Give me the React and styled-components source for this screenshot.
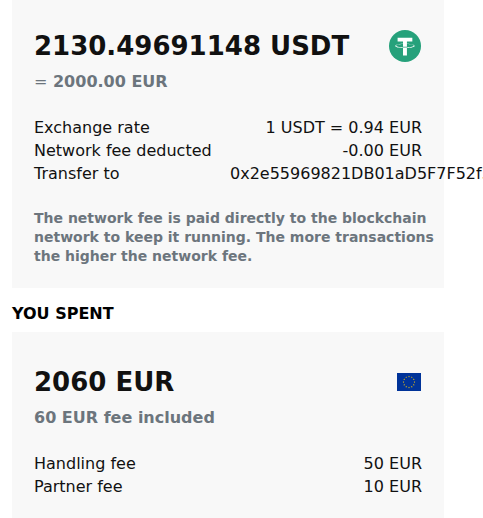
import React from 'react';
import styled, { createGlobalStyle } from 'styled-components';

const GlobalStyle = createGlobalStyle`
  *, *::before, *::after { box-sizing: border-box; }
  body {
    margin: 0;
    background: #fff;
    color: #111;
    font: 16px/23px "DejaVu Sans", Verdana, sans-serif;
  }
`;

const Page = styled.main`
  padding-left: 12px;
  padding-right: 39px;
  overflow-x: clip;
`;

const Card = styled.section`
  padding: ${({ $top }) => $top}px 22px ${({ $bottom }) => $bottom}px;
  background: #f8f8f8;
`;

const AmountRow = styled.div`
  display: flex;
  align-items: center;
  justify-content: space-between;
  padding-right: 1px;
`;

const Amount = styled.h1`
  margin: 0;
  font-size: 26px;
  line-height: 40px;
  font-weight: 700;
  white-space: nowrap;
`;

const Subtitle = styled.p`
  margin: 4px 0 22px;
  color: #6c757d;
  font-weight: 700;
  line-height: 24px;
`;

const EqualSign = styled.span`
  font-weight: 400;
`;

const Details = styled.dl`
  margin: 0;
`;

const DetailRow = styled.div`
  display: grid;
  grid-template-columns: minmax(0, 1fr) minmax(0, 1fr);
  column-gap: 4px;
`;

const Label = styled.dt`
  white-space: nowrap;
`;

const Value = styled.dd`
  margin: 0;
  text-align: right;
  white-space: nowrap;
`;

const Note = styled.p`
  margin: 24px -12px 0 0;
  color: #6c757d;
  font-size: 14px;
  line-height: 19px;
  font-weight: 700;
`;

const SectionTitle = styled.h2`
  margin: 14px 0 6px;
  font-size: 16px;
  line-height: 24px;
  font-weight: 700;
  color: #000;
`;

const Icon = styled.svg`
  display: block;
  flex: none;
`;

function TetherIcon() {
  return (
    <Icon width="32" height="32" viewBox="0 0 32 32" role="img" aria-label="USDT">
      <circle cx="16" cy="16" r="16" fill="#26a17b" />
      <path
        fill="#fff"
        d="M17.922 17.383v-.002c-.11.008-.677.042-1.942.042-1.01 0-1.721-.03-1.971-.042v.003c-3.888-.171-6.79-.848-6.79-1.658 0-.809 2.902-1.486 6.79-1.66v2.644c.254.018.982.061 1.988.061 1.207 0 1.812-.05 1.925-.06v-2.643c3.88.173 6.775.85 6.775 1.658 0 .81-2.895 1.485-6.775 1.657m0-3.59v-2.366h5.414V7.819H8.595v3.608h5.414v2.365c-4.4.202-7.709 1.074-7.709 2.118 0 1.044 3.309 1.915 7.709 2.118v7.582h3.913v-7.584c4.393-.202 7.694-1.073 7.694-2.116 0-1.043-3.301-1.914-7.694-2.117"
      />
    </Icon>
  );
}

const STAR = 'M0-1 .225-.309.951-.309.363.118.588.809 0 .382-.588.809-.363.118-.951-.309-.225-.309z';

function EuFlag() {
  return (
    <Icon width="24" height="18" viewBox="0 0 24 18" role="img" aria-label="EUR">
      <rect width="24" height="18" fill="#039" />
      {Array.from({ length: 12 }, (_, i) => {
        const a = (i * Math.PI) / 6;
        return (
          <path
            key={i}
            d={STAR}
            fill="#fc0"
            transform={`translate(${12 + 5.5 * Math.sin(a)} ${9 - 5.5 * Math.cos(a)})`}
          />
        );
      })}
    </Icon>
  );
}

const RECEIVED = [
  ['Exchange rate', '1 USDT = 0.94 EUR'],
  ['Network fee deducted', '-0.00 EUR'],
  ['Transfer to', '0x2e55969821DB01aD5F7F52f3'],
];

const SPENT = [
  ['Handling fee', '50 EUR'],
  ['Partner fee', '10 EUR'],
];

function DetailList({ items }) {
  return (
    <Details>
      {items.map(([label, value]) => (
        <DetailRow key={label}>
          <Label>{label}</Label>
          <Value>{value}</Value>
        </DetailRow>
      ))}
    </Details>
  );
}

export default function App() {
  return (
    <Page>
      <GlobalStyle />
      <Card $top={26} $bottom={22}>
        <AmountRow>
          <Amount>2130.49691148 USDT</Amount>
          <TetherIcon />
        </AmountRow>
        <Subtitle>
          <EqualSign>=</EqualSign> 2000.00 EUR
        </Subtitle>
        <DetailList items={RECEIVED} />
        <Note>
          The network fee is paid directly to the blockchain network to keep it running. The more
          transactions the higher the network fee.
        </Note>
      </Card>
      <SectionTitle>YOU SPENT</SectionTitle>
      <Card $top={30} $bottom={20}>
        <AmountRow>
          <Amount as="h3">2060 EUR</Amount>
          <EuFlag />
        </AmountRow>
        <Subtitle>60 EUR fee included</Subtitle>
        <DetailList items={SPENT} />
      </Card>
    </Page>
  );
}
